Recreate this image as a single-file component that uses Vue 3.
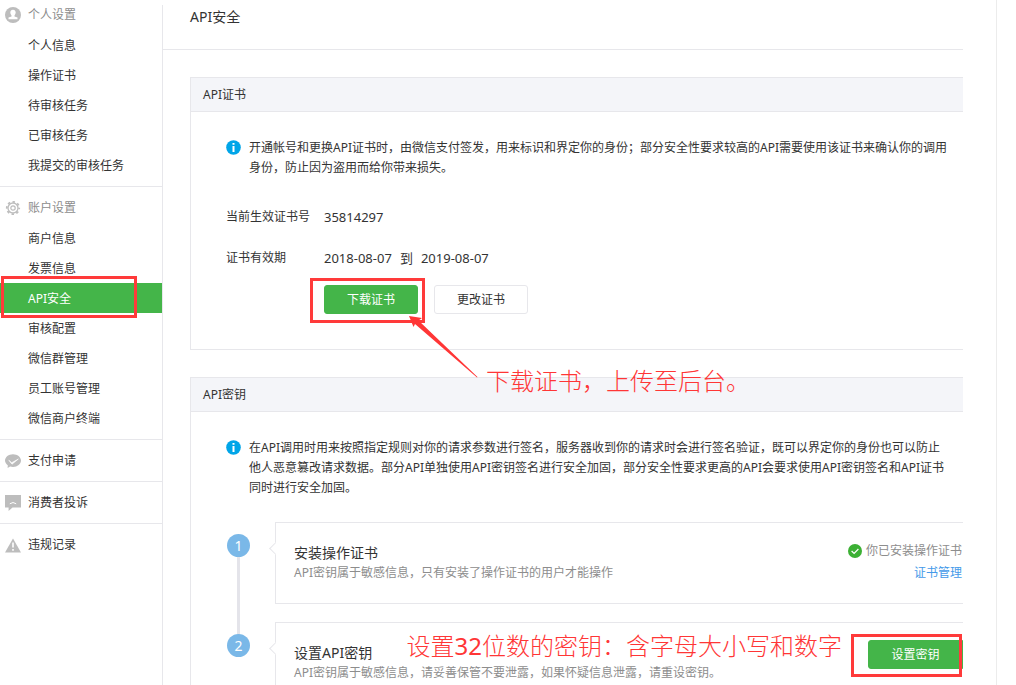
<script setup>
const groups = [
  {
    title: '个人设置',
    icon: 'user',
    items: ['个人信息', '操作证书', '待审核任务', '已审核任务', '我提交的审核任务'],
  },
  {
    title: '账户设置',
    icon: 'gear',
    items: ['商户信息', '发票信息', 'API安全', '审核配置', '微信群管理', '员工账号管理', '微信商户终端'],
  },
]
const singles = [
  { label: '支付申请', icon: 'check' },
  { label: '消费者投诉', icon: 'bubble' },
  { label: '违规记录', icon: 'warn' },
]
const active = 'API安全'
</script>

<template>
  <div class="page">
    <nav class="sidebar">
      <section v-for="g in groups" :key="g.title" class="group">
        <h2 class="group-title">
          <svg v-if="g.icon === 'user'" class="side-icon" viewBox="0 0 16 16" aria-hidden="true">
            <circle cx="8" cy="8" r="8" fill="#bdbdbd" />
            <path d="M8 2.8c1.7 0 2.7 1.2 2.7 2.8 0 1.2-.6 2.2-1.2 2.8v1l3 1.2v1.6h-9v-1.6l3-1.2v-1C5.900 7.800 5.300 6.800 5.300 5.600 5.300 4 6.300 2.800 8 2.800z" fill="#fff" />
          </svg>
          <svg v-else class="side-icon" viewBox="0 0 16 16" fill="none" stroke="#bdbdbd" aria-hidden="true">
            <circle cx="8" cy="8" r="5" stroke-width="1.3" />
            <circle cx="8" cy="8" r="2.200" stroke-width="1.200" />
            <circle cx="8" cy="8" r="6.200" stroke-width="1.800" stroke-dasharray="2.435 2.435" stroke-dashoffset="1.217" />
          </svg>
          {{ g.title }}
        </h2>
        <ul class="menu">
          <li v-for="item in g.items" :key="item" class="menu-row">
            <a href="#" class="menu-link" :class="{ active: item === active }">{{ item }}</a>
            <span v-if="item === active" class="mark mark-menu"></span>
          </li>
        </ul>
      </section>
      <a v-for="s in singles" :key="s.label" href="#" class="single">
        <svg v-if="s.icon === 'check'" class="side-icon" viewBox="0 0 16 16" aria-hidden="true">
          <path d="M8 1.200c4.400 0 8 2.800 8 6.400S12.400 14 8 14c-1 0-2-.2-2.900-.5L2.600 15l.2-2.700C1.100 11.100 0 9.500 0 7.600 0 4 3.600 1.200 8 1.200z" fill="#bdbdbd" />
          <path d="M3.800 7.200l2.900 2.500 6.700-3.700-6.400 5.200z" fill="#fff" stroke="#fff" stroke-width=".6" />
        </svg>
        <svg v-else-if="s.icon === 'bubble'" class="side-icon" viewBox="0 0 16 16" aria-hidden="true">
          <path d="M0 0h16v12.500H7.500L3.600 16v-3.500H0z" fill="#bdbdbd" />
          <path d="M4.800 8.800q3.200-2.600 6.400 0" fill="none" stroke="#fff" stroke-width="1" />
        </svg>
        <svg v-else class="side-icon" viewBox="0 0 16 16" aria-hidden="true">
          <path d="M8 1.500L16 15.500H0z" fill="#bdbdbd" />
          <path d="M8 5.500v5M8 12v1.800" stroke="#fff" stroke-width="1.600" />
        </svg>
        {{ s.label }}
      </a>
    </nav>

    <main class="main">
      <h1 class="page-title">API安全</h1>

      <section class="panel">
        <h2 class="panel-head">API证书</h2>
        <div class="panel-body">
          <div class="tip">
            <svg class="info" viewBox="0 0 15 15" aria-hidden="true">
              <circle cx="7.500" cy="7.500" r="7.300" fill="#00a5e8" />
              <path d="M6.500 3h2v1.800h-2zM6.500 6h2v6h-2z" fill="#fff" />
            </svg>
            <p>开通帐号和更换API证书时，由微信支付签发，用来标识和界定你的身份；部分安全性要求较高的API需要使用该证书来确认你的调用<br>身份，防止因为盗用而给你带来损失。</p>
          </div>
          <dl class="facts">
            <dt>当前生效证书号</dt>
            <dd>35814297</dd>
            <dt>证书有效期</dt>
            <dd class="range"><span>2018-08-07</span><span>到</span><span>2019-08-07</span></dd>
          </dl>
          <div class="actions">
            <div class="marked">
              <button type="button" class="btn primary">下载证书</button>
              <span class="mark mark-download"></span>
              <svg class="arrow" viewBox="0 0 70 64" aria-hidden="true">
                <path d="M0 0L13 2L9.500 4.500L68.500 61L68 61.500L6 8L4.500 11z" fill="#ff3636" />
              </svg>
              <span class="note note-download">下载证书，上传至后台。</span>
            </div>
            <button type="button" class="btn plain">更改证书</button>
          </div>
        </div>
      </section>

      <section class="panel">
        <h2 class="panel-head">API密钥</h2>
        <div class="panel-body">
          <div class="tip">
            <svg class="info" viewBox="0 0 15 15" aria-hidden="true">
              <circle cx="7.500" cy="7.500" r="7.300" fill="#00a5e8" />
              <path d="M6.500 3h2v1.800h-2zM6.500 6h2v6h-2z" fill="#fff" />
            </svg>
            <p>在API调用时用来按照指定规则对你的请求参数进行签名，服务器收到你的请求时会进行签名验证，既可以界定你的身份也可以防止<br>他人恶意篡改请求数据。部分API单独使用API密钥签名进行安全加固，部分安全性要求更高的API会要求使用API密钥签名和API证书<br>同时进行安全加固。</p>
          </div>
          <ol class="steps">
            <li class="step">
              <span class="num">1</span>
              <div class="card">
                <div class="card-text">
                  <h3>安装操作证书</h3>
                  <p>API密钥属于敏感信息，只有安装了操作证书的用户才能操作</p>
                </div>
                <div class="state">
                  <span class="done">
                    <svg class="ok" viewBox="0 0 14 14" aria-hidden="true">
                      <circle cx="7" cy="7" r="7" fill="#3cb034" />
                      <path d="M3.600 7l2.500 2.400 4.300-4.400" fill="none" stroke="#fff" stroke-width="1.200" />
                    </svg>你已安装操作证书
                  </span>
                  <a href="#" class="manage">证书管理</a>
                </div>
              </div>
            </li>
            <li class="step">
              <span class="num">2</span>
              <div class="card">
                <div class="card-text">
                  <h3>设置API密钥</h3>
                  <p>API密钥属于敏感信息，请妥善保管不要泄露，如果怀疑信息泄露，请重设密钥。</p>
                </div>
                <div class="marked set-key">
                  <button type="button" class="btn primary">设置密钥</button>
                  <span class="mark mark-key"></span>
                  <span class="note note-key">设置<b>32</b>位数的密钥：含字母大小写和数字</span>
                </div>
              </div>
            </li>
          </ol>
        </div>
      </section>
    </main>
    <div class="edge"></div>
  </div>
</template>

<style>
body {
  margin: 0;
  background: #fff;
}
</style>

<style scoped>
.page {
  display: flex;
  height: 100vh;
  overflow: hidden;
  font: 12px/20px "Noto Sans", "Noto Sans CJK SC", sans-serif;
  color: #333;
}
h1, h2, h3, p, ul, ol, dl, dd {
  margin: 0;
  padding: 0;
  font-weight: 400;
  list-style: none;
}
a {
  text-decoration: none;
  color: inherit;
}

.sidebar {
  flex: none;
  width: 162px;
  margin-top: 5px;
  border-right: 1px solid #e7e7eb;
}
.group {
  padding: 11px 0 6px;
  border-bottom: 1px solid #e7e7eb;
}
.group:first-child {
  padding-top: 0;
}
.group-title {
  display: flex;
  align-items: center;
  gap: 7px;
  padding-left: 5px;
  margin-bottom: 5px;
  font-size: 12px;
  line-height: 20px;
  color: #8d8d8d;
}
.side-icon {
  flex: none;
  width: 16px;
  height: 16px;
}
.menu-row {
  position: relative;
}
.menu-link {
  display: block;
  padding: 2px 0 0 28px;
  line-height: 28px;
}
.menu-link.active {
  background: #44b549;
  color: #fff;
}
.single {
  display: flex;
  align-items: center;
  gap: 7px;
  height: 41px;
  padding-left: 5px;
  border-bottom: 1px solid #e7e7eb;
}
.single:last-child {
  border-bottom: 0;
}

.main {
  flex: 1;
  min-width: 0;
  overflow: hidden;
}
.page-title {
  padding: 7px 27px 22px;
  border-bottom: 1px solid #e7e7eb;
  font-size: 14px;
  line-height: 20px;
}
.panel {
  margin: 27px 0 0 27px;
  border: 1px solid #e7e7eb;
  border-right: 0;
}
.panel-head {
  padding-left: 12px;
  border-bottom: 1px solid #e7e7eb;
  background: #f4f5f9;
  font-size: 12px;
  line-height: 33px;
}
.panel-body {
  padding: 26px 0 35px 35px;
}
.tip {
  display: flex;
  align-items: flex-start;
  gap: 8px;
  white-space: nowrap;
}
.info {
  flex: none;
  width: 15px;
  height: 15px;
  margin-top: 2px;
}
.facts {
  display: grid;
  grid-template-columns: 98px 1fr;
  row-gap: 21px;
  margin-top: 29px;
}
.facts dd {
  font-size: 13px;
}
.range {
  display: flex;
  gap: 8px;
}
.actions {
  display: flex;
  gap: 16px;
  margin: 17px 0 0 98px;
}
.btn {
  box-sizing: border-box;
  display: block;
  width: 94px;
  height: 29px;
  padding: 0;
  border: 1px solid #e7e7eb;
  border-radius: 3px;
  background: #fff;
  color: #333;
  font: inherit;
}
.btn.primary {
  border-color: #44b549;
  background: #44b549;
  color: #fff;
}

.marked {
  position: relative;
}
.mark {
  position: absolute;
  box-sizing: border-box;
  border: 3px solid #ff3a3a;
  pointer-events: none;
}
.mark-menu {
  top: -7px;
  left: 1px;
  width: 136px;
  height: 42px;
}
.mark-download {
  top: -7px;
  left: -14px;
  width: 115px;
  height: 45px;
}
.mark-key {
  top: -6px;
  left: -17px;
  right: 1px;
  height: 43px;
}
.arrow {
  position: absolute;
  top: 31px;
  left: 85px;
  width: 70px;
  height: 64px;
}
.note {
  position: absolute;
  color: #ff3636;
  font-family: "Noto Sans CJK SC", sans-serif;
  font-size: 24px;
  font-weight: 300;
  line-height: 32px;
  white-space: nowrap;
}
.note b {
  font-family: "Noto Sans", sans-serif;
  font-weight: 400;
}
.note-download {
  top: 79px;
  left: 162px;
}
.note-key {
  top: -11px;
  right: 121px;
}

.steps {
  margin-top: 24px;
}
.step {
  position: relative;
  display: flex;
  align-items: flex-start;
  gap: 25px;
  padding: 0 0 18px 1px;
}
.step:not(:last-child)::before {
  content: "";
  position: absolute;
  top: 20px;
  bottom: -20px;
  left: 11px;
  width: 3px;
  background: #e4e4ea;
}
.num {
  position: relative;
  flex: none;
  width: 23px;
  height: 23px;
  margin-top: 12px;
  border-radius: 50%;
  background: #7ab8e8;
  color: #fff;
  font-size: 14px;
  line-height: 23px;
  text-align: center;
}
.card {
  position: relative;
  flex: 1;
  display: flex;
  justify-content: space-between;
  align-items: flex-start;
  min-width: 0;
  min-height: 80px;
  border: 1px solid #e7e7eb;
  border-right: 0;
}
.card::before {
  content: "";
  position: absolute;
  top: 21px;
  left: -5px;
  width: 8px;
  height: 8px;
  border: solid #e7e7eb;
  border-width: 0 0 1px 1px;
  background: #fff;
  transform: rotate(45deg);
}
.card-text {
  padding: 20px 0 0 18px;
  color: #8d8d8d;
}
.card-text h3 {
  color: #333;
  font-size: 14px;
  line-height: 20px;
}
.state {
  display: flex;
  flex-direction: column;
  align-items: flex-end;
  gap: 2px;
  padding: 18px 1px 0 0;
  color: #8d8d8d;
}
.done {
  display: flex;
  align-items: center;
  gap: 4px;
}
.ok {
  width: 14px;
  height: 14px;
}
.manage {
  color: #459ae9;
}
.set-key {
  margin-top: 17px;
}
.set-key .btn {
  width: 95px;
  border-radius: 3px 0 0 3px;
}

.edge {
  flex: none;
  width: 19px;
  margin-left: 33px;
  border-left: 1px solid #ececec;
}
</style>
